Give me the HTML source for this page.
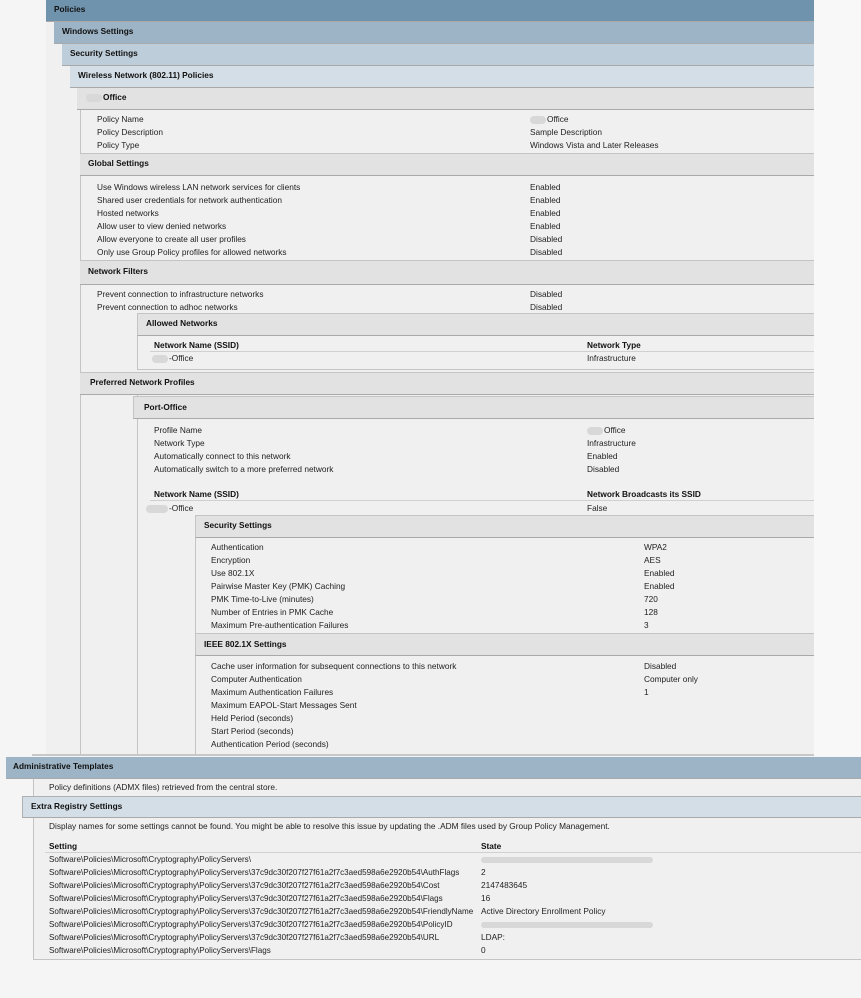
<!DOCTYPE html>
<html><head><meta charset="utf-8"><style>
body{margin:0;width:861px;height:998px;background:#f5f5f5;position:relative;overflow:hidden;font-family:"Liberation Sans",Arial,sans-serif;font-size:8.3px;color:#222}
div{position:absolute;box-sizing:border-box}
.h{font-weight:bold;color:#111;padding-left:8px;padding-top:4px;border-bottom:1px solid #a9a9a9}
.g{background:#e2e2e2}
.t{white-space:nowrap;line-height:13px}
.b{font-weight:bold;color:#111}
.bx{border-left:1px solid #c4c4c4;border-bottom:1px solid #c4c4c4;background:#f0f0f0}
.blur{display:inline-block;width:16px;height:8px;background:#d8d8d8;border-radius:4px;vertical-align:middle;margin-right:1px}
</style></head><body>
<div style="left:814px;top:0;width:47px;height:756px;background:#f8f8f8"></div>
<div style="left:46px;top:0;width:768px;height:756px;background:#f0f0f0"></div>
<div class="h" style="left:46px;top:0;width:768px;height:22px;background:#6f93ad">Policies</div>
<div class="h" style="left:54px;top:22px;width:760px;height:22px;background:#9cb4c5">Windows Settings</div>
<div class="h" style="left:62px;top:44px;width:752px;height:22px;background:#bdcdd9">Security Settings</div>
<div class="h" style="left:70px;top:66px;width:744px;height:22px;background:#d4dee6">Wireless Network (802.11) Policies</div>
<div class="h g" style="left:77px;top:88px;width:737px;height:22px;padding-left:9px"><span class="blur"></span>Office</div>
<div class="bx" style="left:80px;top:110px;width:734px;height:646px"></div>
<div class="t" style="left:97px;top:113px">Policy Name<br>Policy Description<br>Policy Type</div>
<div class="t" style="left:530px;top:113px"><span class="blur"></span>Office<br>Sample Description<br>Windows Vista and Later Releases</div>
<div class="h g" style="left:80px;top:153px;width:734px;height:23px;border-top:1px solid #c4c4c4">Global Settings</div>
<div class="t" style="left:97px;top:181px">Use Windows wireless LAN network services for clients<br>Shared user credentials for network authentication<br>Hosted networks<br>Allow user to view denied networks<br>Allow everyone to create all user profiles<br>Only use Group Policy profiles for allowed networks</div>
<div class="t" style="left:530px;top:181px">Enabled<br>Enabled<br>Enabled<br>Enabled<br>Disabled<br>Disabled</div>
<div class="h g" style="left:80px;top:260px;width:734px;height:25px;border-top:1px solid #c4c4c4;padding-top:5px">Network Filters</div>
<div class="t" style="left:97px;top:288px">Prevent connection to infrastructure networks<br>Prevent connection to adhoc networks</div>
<div class="t" style="left:530px;top:288px">Disabled<br>Disabled</div>
<div class="bx" style="left:137px;top:313px;width:677px;height:57px;border-right:0"></div>
<div class="h g" style="left:137px;top:313px;width:677px;height:23px;border-top:1px solid #c4c4c4;border-left:1px solid #c4c4c4;padding-top:4px">Allowed Networks</div>
<div class="t b" style="left:154px;top:339px">Network Name (SSID)</div>
<div class="t b" style="left:587px;top:339px">Network Type</div>
<div style="left:150px;top:351px;width:664px;height:1px;background:#d0d0d0"></div>
<div class="t" style="left:152px;top:352px"><span class="blur"></span>-Office</div>
<div class="t" style="left:587px;top:352px">Infrastructure</div>
<div class="h g" style="left:80px;top:372px;width:734px;height:23px;border-top:1px solid #c4c4c4;padding-left:10px">Preferred Network Profiles</div>
<div class="bx" style="left:137px;top:395px;width:677px;height:361px"></div>
<div class="h g" style="left:133px;top:396px;width:681px;height:23px;border-top:1px solid #c4c4c4;border-left:1px solid #c4c4c4;padding-left:10px;padding-top:5px">Port-Office</div>
<div class="t" style="left:154px;top:424px">Profile Name<br>Network Type<br>Automatically connect to this network<br>Automatically switch to a more preferred network</div>
<div class="t" style="left:587px;top:424px"><span class="blur"></span>Office<br>Infrastructure<br>Enabled<br>Disabled</div>
<div class="t b" style="left:154px;top:488px">Network Name (SSID)</div>
<div class="t b" style="left:587px;top:488px">Network Broadcasts its SSID</div>
<div style="left:150px;top:500px;width:664px;height:1px;background:#d0d0d0"></div>
<div class="t" style="left:146px;top:502px"><span class="blur" style="width:22px"></span>-Office</div>
<div class="t" style="left:587px;top:502px">False</div>
<div class="bx" style="left:195px;top:515px;width:619px;height:241px"></div>
<div class="h g" style="left:195px;top:515px;width:619px;height:23px;border-top:1px solid #c4c4c4;border-left:1px solid #c4c4c4;padding-top:4px">Security Settings</div>
<div class="t" style="left:211px;top:541px">Authentication<br>Encryption<br>Use 802.1X<br>Pairwise Master Key (PMK) Caching<br>PMK Time-to-Live (minutes)<br>Number of Entries in PMK Cache<br>Maximum Pre-authentication Failures</div>
<div class="t" style="left:644px;top:541px">WPA2<br>AES<br>Enabled<br>Enabled<br>720<br>128<br>3</div>
<div class="h g" style="left:195px;top:633px;width:619px;height:23px;border-top:1px solid #c4c4c4;border-left:1px solid #c4c4c4;padding-top:5px">IEEE 802.1X Settings</div>
<div class="t" style="left:211px;top:660px">Cache user information for subsequent connections to this network<br>Computer Authentication<br>Maximum Authentication Failures<br>Maximum EAPOL-Start Messages Sent<br>Held Period (seconds)<br>Start Period (seconds)<br>Authentication Period (seconds)</div>
<div class="t" style="left:644px;top:660px">Disabled<br>Computer only<br>1</div>
<div style="left:32px;top:754px;width:782px;height:2px;background:#c8c8c8"></div>
<div class="bx" style="left:33px;top:778px;width:828px;height:182px"></div>
<div class="h" style="left:6px;top:757px;width:855px;height:22px;background:#9cb4c5;padding-left:7px">Administrative Templates</div>
<div class="t" style="left:49px;top:781px">Policy definitions (ADMX files) retrieved from the central store.</div>
<div class="h" style="left:22px;top:796px;width:839px;height:22px;background:#d4dee6;border-top:1px solid #b0b0b0;border-left:1px solid #b0b0b0">Extra Registry Settings</div>
<div class="t" style="left:49px;top:820px">Display names for some settings cannot be found. You might be able to resolve this issue by updating the .ADM files used by Group Policy Management.</div>
<div class="t b" style="left:49px;top:840px">Setting</div>
<div class="t b" style="left:481px;top:840px">State</div>
<div style="left:45px;top:852px;width:816px;height:1px;background:#d0d0d0"></div>
<div class="t" style="left:49px;top:853px;font-size:8.1px">Software\Policies\Microsoft\Cryptography\PolicyServers\<br>Software\Policies\Microsoft\Cryptography\PolicyServers\37c9dc30f207f27f61a2f7c3aed598a6e2920b54\AuthFlags<br>Software\Policies\Microsoft\Cryptography\PolicyServers\37c9dc30f207f27f61a2f7c3aed598a6e2920b54\Cost<br>Software\Policies\Microsoft\Cryptography\PolicyServers\37c9dc30f207f27f61a2f7c3aed598a6e2920b54\Flags<br>Software\Policies\Microsoft\Cryptography\PolicyServers\37c9dc30f207f27f61a2f7c3aed598a6e2920b54\FriendlyName<br>Software\Policies\Microsoft\Cryptography\PolicyServers\37c9dc30f207f27f61a2f7c3aed598a6e2920b54\PolicyID<br>Software\Policies\Microsoft\Cryptography\PolicyServers\37c9dc30f207f27f61a2f7c3aed598a6e2920b54\URL<br>Software\Policies\Microsoft\Cryptography\PolicyServers\Flags</div>
<div class="t" style="left:481px;top:853px"><span class="blur" style="width:172px;height:6px"></span><br>2<br>2147483645<br>16<br>Active Directory Enrollment Policy<br><span class="blur" style="width:172px;height:6px"></span><br>LDAP:<br>0</div>
</body></html>
